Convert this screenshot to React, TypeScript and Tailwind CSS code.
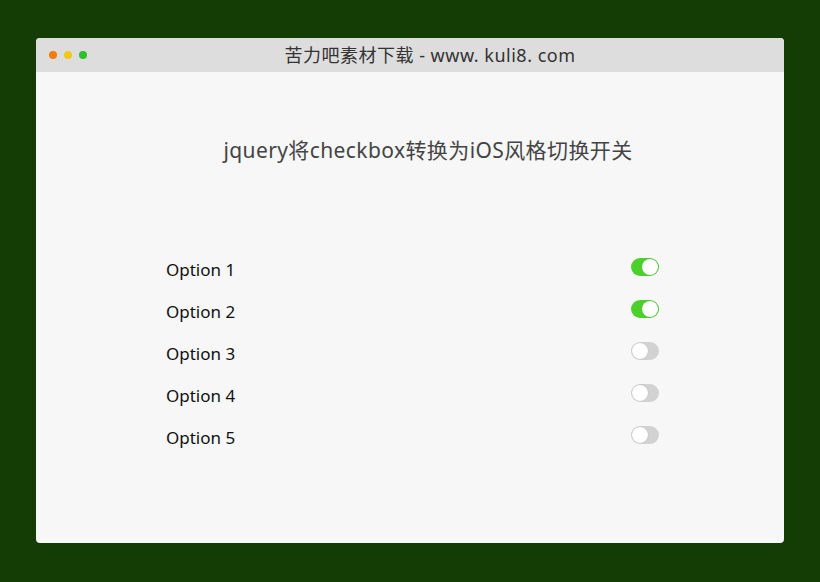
import React from 'react';

const options = [
  { label: 'Option 1', on: true },
  { label: 'Option 2', on: true },
  { label: 'Option 3', on: false },
  { label: 'Option 4', on: false },
  { label: 'Option 5', on: false },
];

const Toggle = ({ on }: { on: boolean }) => (
  <div
    className={
      on
        ? 'flex h-[18px] w-[28px] items-center justify-end rounded-full bg-[#4cd02c] p-[1px]'
        : 'flex h-[18px] w-[28px] items-center justify-start rounded-full bg-[#d2d2d2] p-[1px]'
    }
  >
    <div className="h-[16px] w-[16px] rounded-full bg-white shadow-[0_0_1px_rgba(0,0,0,0.25)]" />
  </div>
);

const App = () => {
  return (
    <div
      className="flex h-[582px] w-[820px] bg-[#133d05] pl-[36px] pt-[38px]"
      style={{ fontFamily: '"Noto Sans", "Noto Sans CJK SC", sans-serif' }}
    >
      <div className="flex h-[505px] w-[748px] flex-col overflow-hidden rounded-[4px] bg-[#f7f7f7]">
        <div className="relative flex h-[34px] items-center justify-center bg-[#dddddd] pl-[40px]">
          <div className="absolute left-[13px] top-[13px] flex gap-[7px]">
            <span className="h-[8px] w-[8px] rounded-full bg-[#f47c0c]" />
            <span className="h-[8px] w-[8px] rounded-full bg-[#f3c917]" />
            <span className="h-[8px] w-[8px] rounded-full bg-[#2ec02e]" />
          </div>
          <span className="text-[18px] tracking-[0.5px] text-[#333]">苦力吧素材下载 - www. kuli8. com</span>
        </div>
        <h1 className="mt-[63px] pl-[36px] text-center text-[21px] leading-[30px] tracking-[0.4px] text-[#444]">
          jquery将checkbox转换为iOS风格切换开关
        </h1>
        <div className="ml-[130px] mt-[81px] flex w-[493px] flex-col">
          {options.map((o) => (
            <div key={o.label} className="flex h-[42px] items-center justify-between">
              <span className="pt-[6px] text-[17px] text-[#111]">{o.label}</span>
              <Toggle on={o.on} />
            </div>
          ))}
        </div>
      </div>
    </div>
  );
};

export default App;
